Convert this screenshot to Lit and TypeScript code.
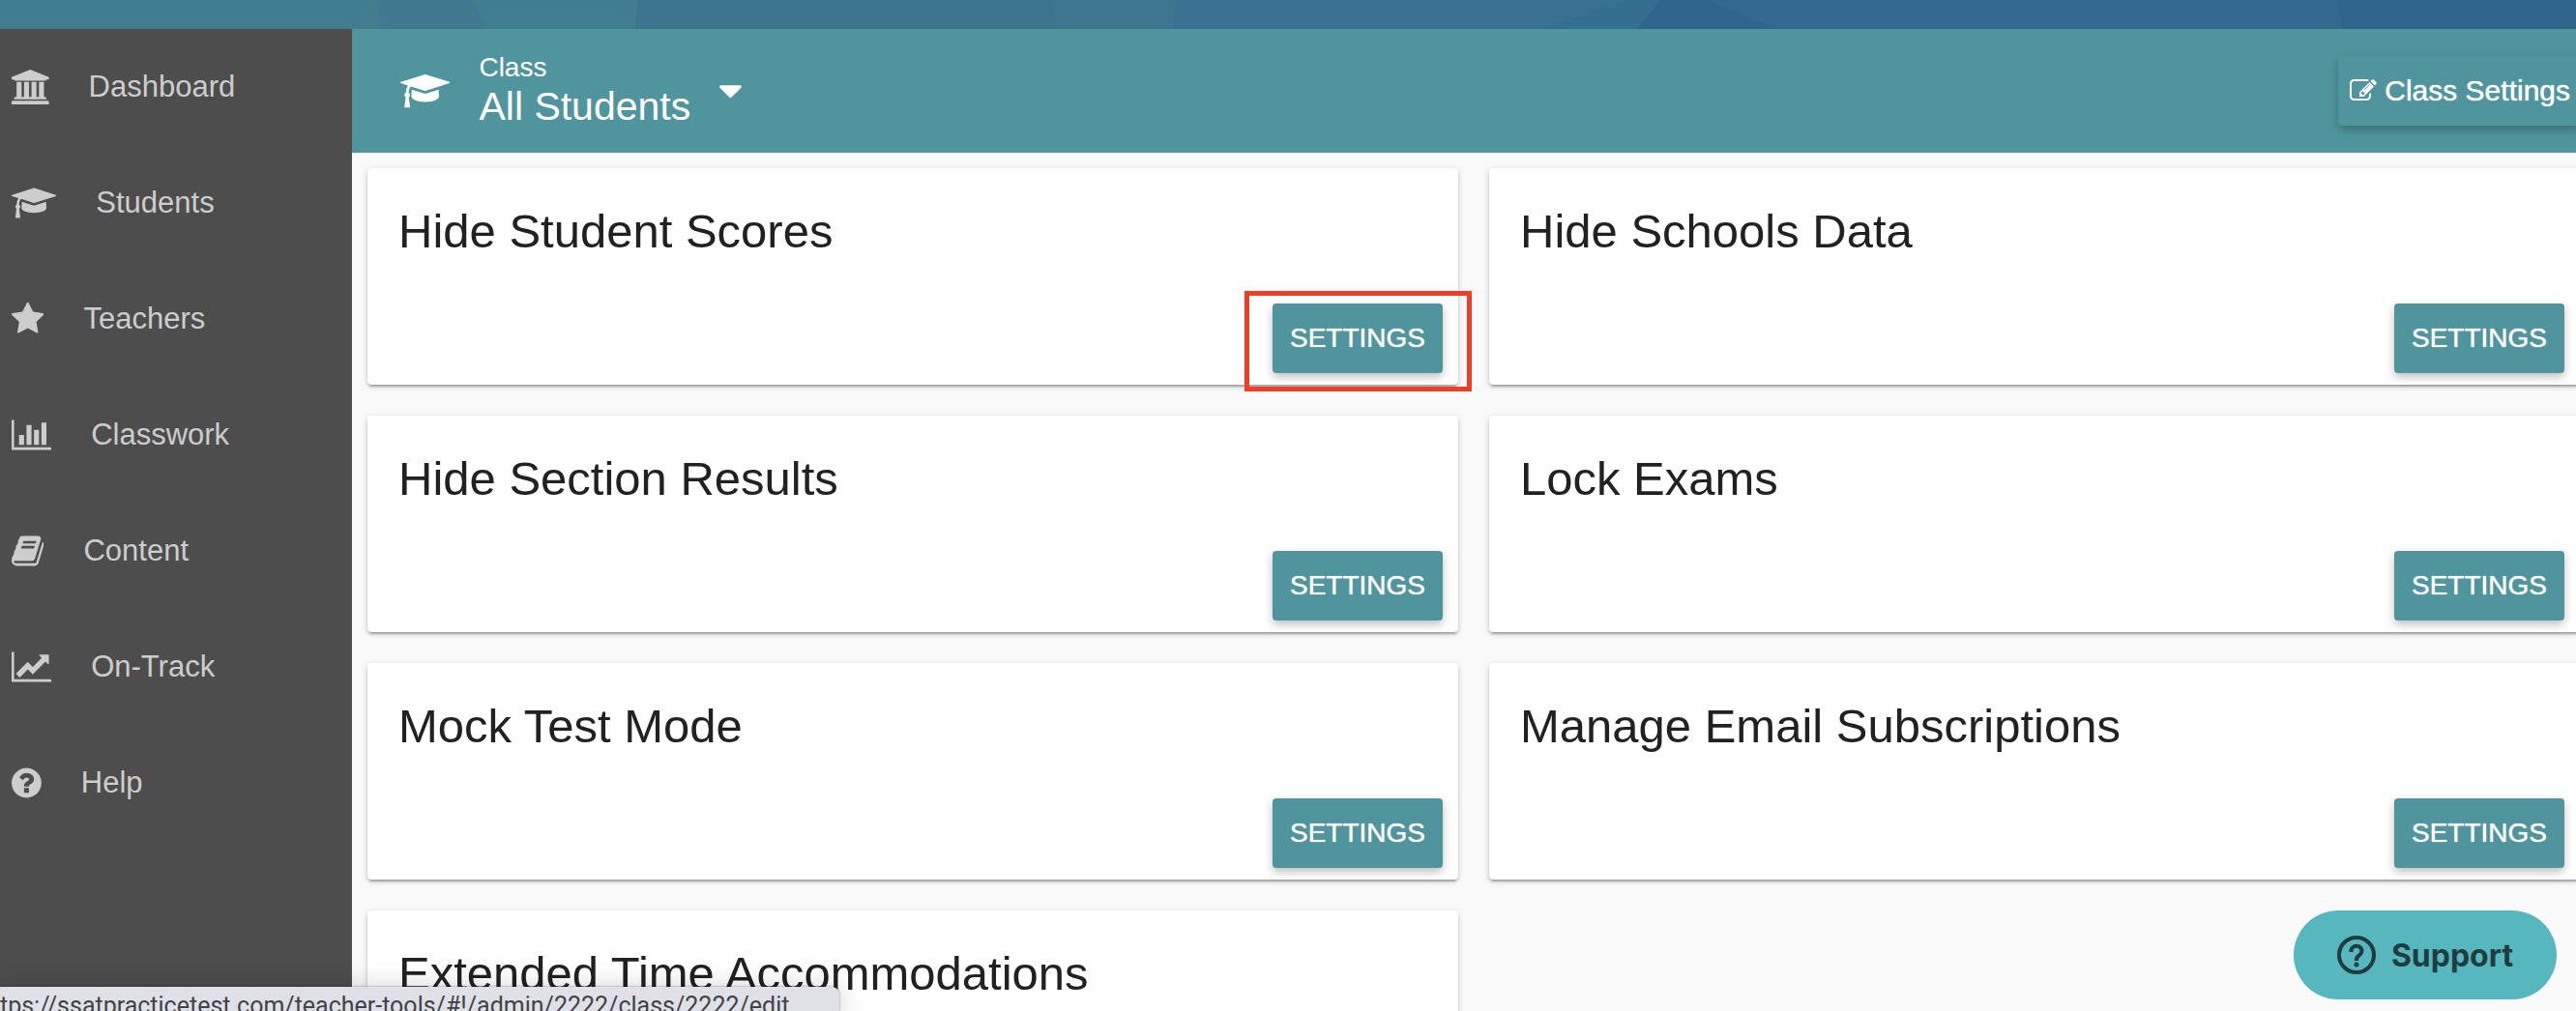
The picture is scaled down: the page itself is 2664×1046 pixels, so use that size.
import { LitElement, html, svg, css } from "lit";
import { customElement, property } from "lit/decorators.js";

type Icon = { x: number; w: number; d: string };

/* Glyphs share a 1792-unit em; x and w give each one's own advance box. */
const ICONS: Record<string, Icon> = {
  university: {
    x: 0,
    w: 1920,
    d: "M960 0l960 384v128h-128q0 26-20.5 45t-48.5 19h-1526q-28 0-48.5-19t-20.5-45h-128v-128zm-704 640h256v768h128v-768h256v768h128v-768h256v768h128v-768h256v768h59q28 0 48.5 19t20.5 45v64h-1664v-64q0-26 20.5-45t48.5-19h59v-768zm1595 960q28 0 48.5 19t20.5 45v128h-1920v-128q0-26 20.5-45t48.5-19h1782z",
  },
  cap: {
    x: 0,
    w: 2304,
    d: "M1774 836l18 316q4 69-82 128t-235 93.5-323 34.5-323-34.5-235-93.5-82-128l18-316 574 181q22 7 48 7t48-7zm530-324q0 23-22 31l-1120 352q-4 1-10 1t-10-1l-652-206q-43 34-71 111.5t-34 178.5q63 36 63 109 0 69-58 107l58 433q2 14-8 25-9 11-24 11h-192q-15 0-24-11-10-11-8-25l58-433q-58-38-58-107 0-73 65-111 11-207 98-330l-333-104q-22-8-22-31t22-31l1120-352q4-1 10-1t10 1l1120 352q22 8 22 31z",
  },
  star: {
    x: 64,
    w: 1664,
    d: "M1728 647q0 22-26 48l-363 354 86 500q1 7 1 20 0 21-10.5 35.5t-30.5 14.5q-19 0-40-12l-449-236-449 236q-22 12-40 12-21 0-31.5-14.5t-10.5-35.5q0-6 2-20l86-500-364-354q-25-27-25-48 0-37 56-46l502-73 225-455q19-41 49-41t49 41l225 455 502 73q56 9 56 46z",
  },
  bars: {
    x: 0,
    w: 2048,
    d: "M640 896v512h-256v-512h256zm384-512v1024h-256v-1024h256zm1024 1152v128h-2048v-1536h128v1408h1920zm-640-896v768h-256v-768h256zm384-384v1152h-256v-1152h256z",
  },
  book: {
    x: 64,
    w: 1664,
    d: "M1703 478q40 57 18 129l-275 906q-19 64-76.5 107.5t-122.5 43.5h-923q-77 0-148.5-53.5t-99.5-131.5q-24-67-2-127 0-4 3-27t4-37q1-8-3-21.5t-3-19.5q2-11 8-21t16.5-23.5 16.5-23.5q23-38 45-91.5t30-91.5q3-10 .5-30t-.5-28q3-11 17-28t17-23q21-36 42-92t25-90q1-9-2.5-32t.5-28q4-13 22-30.5t22-22.5q19-26 42.5-84.5t27.5-96.5q1-8-3-25.5t-2-26.5q2-8 9-18t18-23 17-21q8-12 16.5-30.5t15-35 16-36 19.5-32 26.5-23.5 36-11.5 47.5 5.5l-1 3q38-9 51-9h761q74 0 114 56t18 130l-274 906q-36 119-71.5 153.5t-128.5 34.5h-869q-27 0-38 15-11 16-1 43 24 70 144 70h923q29 0 56-15.5t35-41.5l300-987q7-22 5-57 38 15 59 43zm-1064 2q-4 13 2 22.5t20 9.5h608q13 0 25.5-9.5t16.5-22.5l21-64q4-13-2-22.5t-20-9.5h-608q-13 0-25.5 9.5t-16.5 22.5zm-83 256q-4 13 2 22.5t20 9.5h608q13 0 25.5-9.5t16.5-22.5l21-64q4-13-2-22.5t-20-9.5h-608q-13 0-25.5 9.5t-16.5 22.5z",
  },
  line: {
    x: 0,
    w: 2048,
    d: "M2048 1536v128h-2048v-1536h128v1408h1920zm-128-1248v435q0 21-19.5 29.5t-35.5-7.5l-121-121-633 633q-10 10-23 10t-23-10l-233-233-416 416-192-192 585-585q10-10 23-10t23 10l233 233 464-464-121-121q-16-16-7.5-35.5t29.5-19.5h435q14 0 23 9t9 23z",
  },
  question: {
    x: 128,
    w: 1536,
    d: "M1024 1376v-192q0-14-9-23t-23-9h-192q-14 0-23 9t-9 23v192q0 14 9 23t23 9h192q14 0 23-9t9-23zm256-672q0-88-55.5-163t-138.5-116-170-41q-243 0-371 213-15 24 8 42l132 100q7 6 19 6 16 0 25-12 53-68 86-92 34-24 86-24 48 0 85.5 26t37.5 59q0 38-20 61t-68 45q-63 28-115.5 86.5t-52.5 125.5v36q0 14 9 23t23 9h192q14 0 23-9t9-23q0-19 21.5-49.5t54.5-49.5q32-18 49-28.5t46-35 44.5-48 28-60.5 12.5-81zm384 192q0 209-103 385.5t-279.5 279.5-385.5 103-385.5-103-279.5-279.5-103-385.5 103-385.5 279.5-279.5 385.5-103 385.5 103 279.5 279.5 103 385.5z",
  },
  edit: {
    x: 0,
    w: 1792,
    d: "M888 1184l116-116-152-152-116 116v56h96v96h56zm440-720q-16-16-33 1l-350 350q-17 17-1 33t33-1l350-350q17-17 1-33zm80 594v190q0 119-84.5 203.5t-203.5 84.5h-832q-119 0-203.5-84.5t-84.5-203.5v-832q0-119 84.5-203.5t203.5-84.5h832q63 0 117 25 15 7 18 23 3 17-9 29l-49 49q-14 14-32 8-23-6-45-6h-832q-66 0-113 47t-47 113v832q0 66 47 113t113 47h832q66 0 113-47t47-113v-126q0-13 9-22l64-64q15-15 35-7t20 29zm-96-738l288 288-672 672h-288v-288zm444 132l-92 92-288-288 92-92q28-28 68-28t68 28l152 152q28 28 28 68t-28 68z",
  },
  caret: {
    x: 384,
    w: 1024,
    d: "M1408 704q0 26-19 45l-448 448q-19 19-45 19t-45-19l-448-448q-19-19-19-45t19-45 45-19h896q26 0 45 19t19 45z",
  },
};

const icon = (name: string) => {
  const g = ICONS[name];
  return html`<svg class="icon" viewBox="${g.x} 0 ${g.w} 1792" aria-hidden="true">
    <path d=${g.d}></path>
  </svg>`;
};

const NAV = [
  { icon: "university", label: "Dashboard" },
  { icon: "cap", label: "Students" },
  { icon: "star", label: "Teachers" },
  { icon: "bars", label: "Classwork" },
  { icon: "book", label: "Content" },
  { icon: "line", label: "On-Track" },
  { icon: "question", label: "Help" },
];

const CARDS = [
  "Hide Student Scores",
  "Hide Schools Data",
  "Hide Section Results",
  "Lock Exams",
  "Mock Test Mode",
  "Manage Email Subscriptions",
  "Extended Time Accommodations",
];

const FACETS = [
  { points: "390,0 488,0 504,30 394,30", fill: "#40788f" },
  { points: "660,0 1086,0 1096,30 657,30", fill: "#3c738f" },
  { points: "1086,0 1216,0 1213,30 1096,30", fill: "#3e7690" },
  { points: "1216,0 1680,0 1592,30 1213,30", fill: "#3a7190" },
  { points: "1680,0 1716,0 1693,30 1592,30", fill: "#366e90" },
  { points: "1716,0 1768,0 1838,30 1693,30", fill: "#2f658d" },
  { points: "1768,0 2416,0 2422,30 1838,30", fill: "#33698e" },
  { points: "2416,0 2664,0 2664,30 2422,30", fill: "#30658a" },
];

@customElement("setting-card")
export class SettingCard extends LitElement {
  @property() heading = "";
  @property({ type: Boolean }) marked = false;

  static styles = css`
    :host {
      display: flex;
      flex-direction: column;
      justify-content: space-between;
      box-sizing: border-box;
      min-height: 224px;
      padding: 34px 16px 12px 32px;
      border-radius: 4px;
      background: #fff;
      box-shadow: 0 2px 6px rgba(0, 0, 0, 0.2), 0 2px 2px rgba(0, 0, 0, 0.14),
        0 4px 2px -2px rgba(0, 0, 0, 0.12);
    }
    .title {
      margin: 0;
      font-size: 49px;
      line-height: 62px;
      font-weight: 400;
      color: #212121;
    }
    .action {
      position: relative;
      align-self: flex-end;
      display: flex;
    }
    .button {
      width: 176px;
      height: 72px;
      padding: 0;
      border: 0;
      border-radius: 4px;
      background: #50959d;
      color: #fff;
      font: inherit;
      font-size: 28px;
      text-transform: uppercase;
      text-shadow: 0 0 1px #fff;
      box-shadow: 0 4px 10px rgba(0, 0, 0, 0.26);
      cursor: pointer;
    }
    .marker {
      position: absolute;
      inset: -13px -30px -19px -29px;
      border: 5px solid #ee3f26;
      pointer-events: none;
    }
  `;

  render() {
    return html`
      <h2 class="title">${this.heading}</h2>
      <div class="action">
        <button class="button" type="button">Settings</button>
        ${this.marked ? html`<span class="marker"></span>` : null}
      </div>
    `;
  }
}

@customElement("app-root")
export class AppRoot extends LitElement {
  static styles = css`
    :host {
      display: flex;
      flex-direction: column;
      height: 100vh;
      overflow: hidden;
      position: relative;
      background: #fafafa;
      font-family: "Liberation Sans", Arial, sans-serif;
    }
    .icon {
      display: block;
      flex: none;
      height: 1em;
      fill: currentColor;
    }
    .banner {
      flex: none;
      display: block;
      width: 100%;
      height: 30px;
      background: #427c8f;
    }
    .body {
      flex: 1;
      min-height: 0;
      display: flex;
    }
    .sidebar {
      flex: none;
      width: 364px;
      background: #4d4d4d;
    }
    .nav {
      list-style: none;
      margin: 0;
      padding: 0;
    }
    .link {
      display: flex;
      align-items: center;
      gap: 41px;
      height: 120px;
      padding-left: 12px;
      color: #cdcdcd;
      font-size: 31px;
      text-decoration: none;
    }
    .link .icon {
      font-size: 36px;
    }
    /* The content pane runs slightly past the right edge of the window. */
    .main {
      flex: 1;
      min-width: 0;
      margin-right: -20px;
    }
    .header {
      display: flex;
      align-items: center;
      justify-content: space-between;
      height: 128px;
      padding: 0 16px 0 50px;
      background: #50959d;
      color: #fff;
    }
    .picker {
      display: flex;
      align-items: center;
      gap: 30px;
      padding: 0;
      border: 0;
      background: none;
      color: inherit;
      font: inherit;
      font-size: 40px;
      text-align: left;
      cursor: pointer;
    }
    .names {
      display: flex;
      flex-direction: column;
    }
    .kind {
      font-size: 28px;
      line-height: 32px;
    }
    .current {
      font-size: 41px;
      line-height: 48px;
    }
    .class-settings {
      display: flex;
      align-items: center;
      gap: 8px;
      height: 72px;
      padding: 0 10px 0 12px;
      border: 0;
      border-radius: 4px;
      background: #50959d;
      color: #fff;
      font: inherit;
      font-size: 30px;
      white-space: nowrap;
      text-shadow: 0 0 1px #fff;
      box-shadow: 0 4px 10px rgba(0, 0, 0, 0.26);
      cursor: pointer;
    }
    .class-settings .icon {
      font-size: 28px;
    }
    .cards {
      display: grid;
      grid-template-columns: 1fr 1fr;
      gap: 32px;
      padding: 16px;
    }
    .support {
      position: absolute;
      right: 20px;
      bottom: 12px;
      display: flex;
      align-items: center;
      justify-content: center;
      gap: 16px;
      width: 272px;
      height: 92px;
      padding: 0;
      border: 0;
      border-radius: 46px;
      background: #56b7be;
      color: #1f3d40;
      font-family: Inter, sans-serif;
      font-size: 32px;
      font-weight: 700;
      cursor: pointer;
    }
    .support-icon {
      width: 40px;
      height: 40px;
      fill: none;
      stroke: currentColor;
    }
    .status {
      position: absolute;
      left: 0;
      bottom: 0;
      box-sizing: border-box;
      width: 868px;
      height: 25px;
      overflow: hidden;
      padding-top: 5px;
      border-top-right-radius: 8px;
      background: #dfe1e6;
      color: #3f4247;
      box-shadow: 0 0 2px rgba(0, 0, 0, 0.5), 0 4px 28px rgba(0, 0, 0, 0.25);
      font-family: Roboto, sans-serif;
      font-size: 25px;
      line-height: 30px;
      white-space: nowrap;
    }
  `;

  render() {
    return html`
      <svg class="banner" viewBox="0 0 2664 30" preserveAspectRatio="none" aria-hidden="true">
        ${FACETS.map((f) => svg`<polygon points=${f.points} fill=${f.fill}></polygon>`)}
      </svg>
      <div class="body">
        <aside class="sidebar">
          <ul class="nav">
            ${NAV.map(
              (n) => html`<li>
                <a class="link" href="#">${icon(n.icon)}<span>${n.label}</span></a>
              </li>`
            )}
          </ul>
        </aside>
        <main class="main">
          <header class="header">
            <button class="picker" type="button">
              ${icon("cap")}
              <span class="names">
                <span class="kind">Class</span>
                <span class="current">All Students</span>
              </span>
              ${icon("caret")}
            </button>
            <button class="class-settings" type="button">
              ${icon("edit")}<span>Class Settings</span>
            </button>
          </header>
          <section class="cards">
            ${CARDS.map(
              (c, i) => html`<setting-card .heading=${c} .marked=${i === 0}></setting-card>`
            )}
          </section>
        </main>
      </div>
      <div class="status">tps://ssatpracticetest.com/teacher-tools/#!/admin/2222/class/2222/edit</div>
      <button class="support" type="button">
        <svg class="support-icon" viewBox="0 0 40 40" aria-hidden="true">
          <circle cx="20" cy="20" r="18" stroke-width="4"></circle>
          <path d="M14.5 17v-1a5.5 5 0 1 1 9 3.6c-2 1.500-3.500 2.600-3.500 5.400v1" stroke-width="4"></path>
          <circle cx="20" cy="30" r="2.500" fill="currentColor" stroke="none"></circle>
        </svg>
        <span>Support</span>
      </button>
    `;
  }
}
